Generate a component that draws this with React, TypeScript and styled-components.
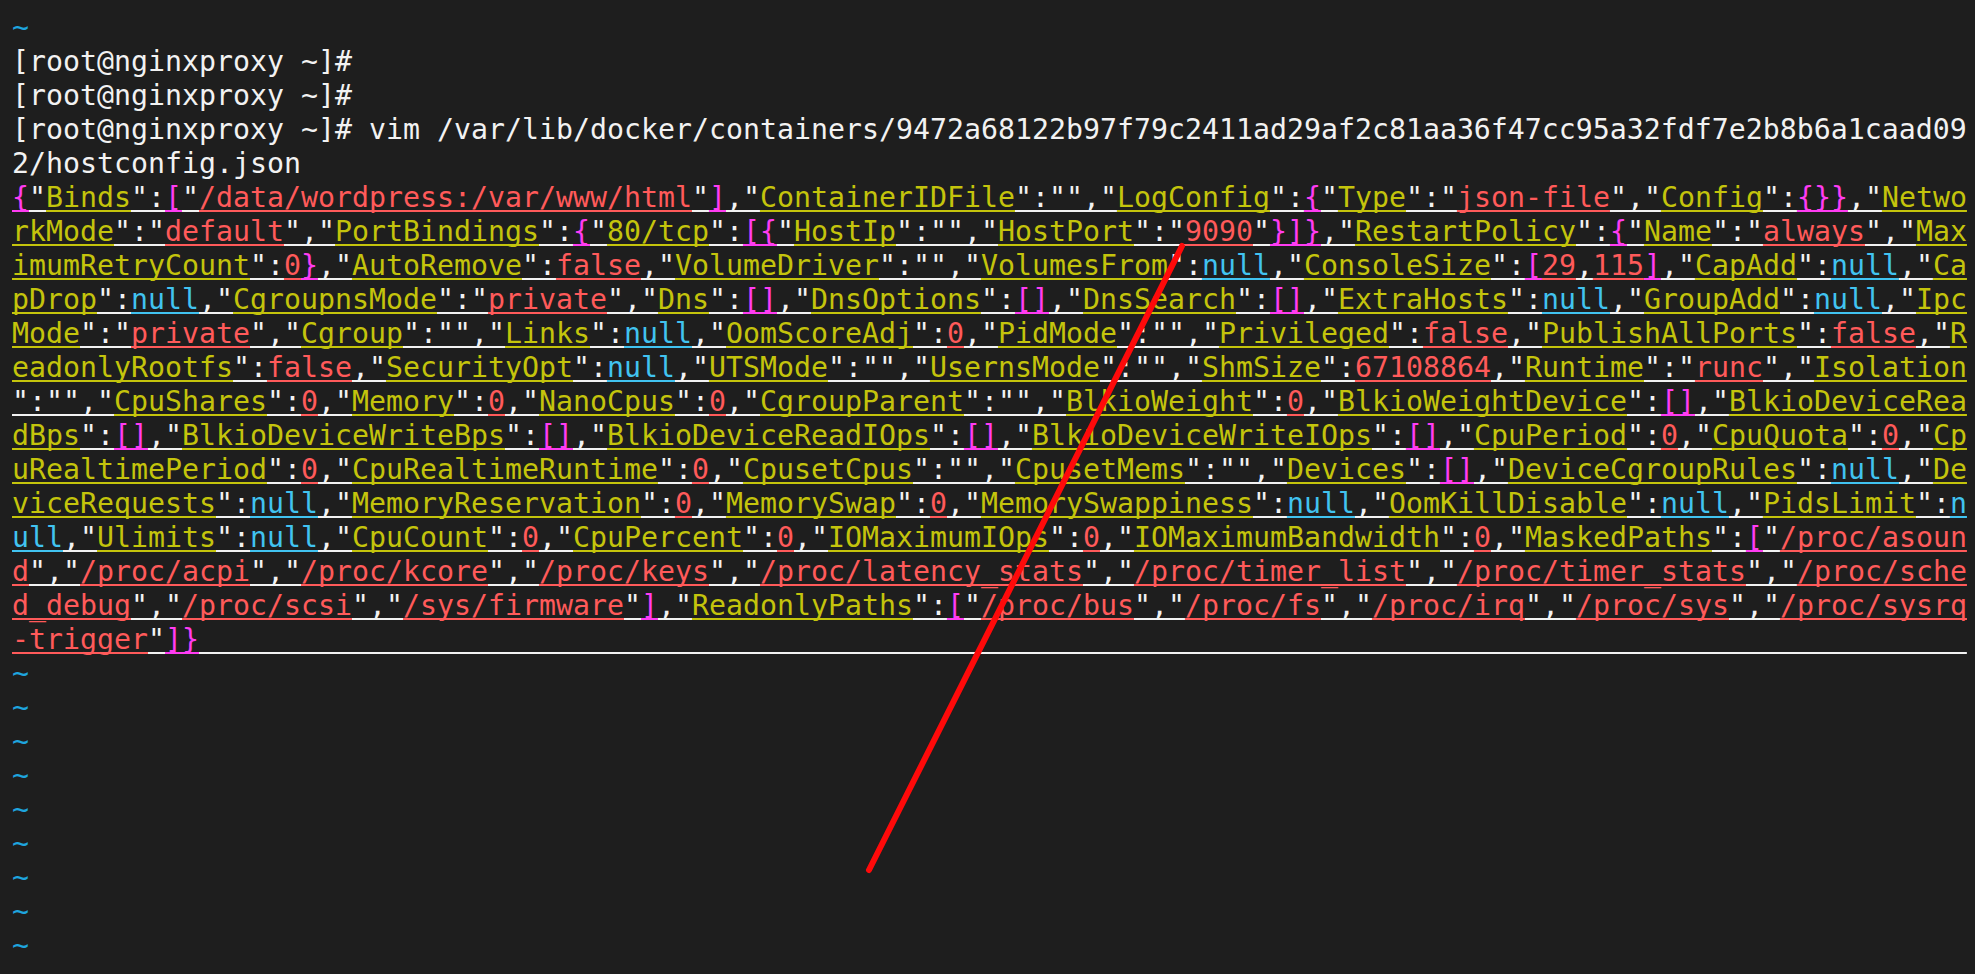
import React from 'react';
import styled, { createGlobalStyle } from 'styled-components';

const COLS = 115;

type Kind = 'text' | 'key' | 'str' | 'brace' | 'nil';

const palette: Record<Kind, string> = {
  text: '#f2f2f2',
  key: '#c4c40c',
  str: '#ff5a5a',
  brace: '#ff3cf2',
  nil: '#41c3f0',
};

const hostConfig =
  '{"Binds":["/data/wordpress:/var/www/html"],"ContainerIDFile":"","LogConfig":{"Type":"json-file","Config":{}},' +
  '"NetworkMode":"default","PortBindings":{"80/tcp":[{"HostIp":"","HostPort":"9090"}]},' +
  '"RestartPolicy":{"Name":"always","MaximumRetryCount":0},"AutoRemove":false,"VolumeDriver":"","VolumesFrom":null,' +
  '"ConsoleSize":[29,115],"CapAdd":null,"CapDrop":null,"CgroupnsMode":"private","Dns":[],"DnsOptions":[],' +
  '"DnsSearch":[],"ExtraHosts":null,"GroupAdd":null,"IpcMode":"private","Cgroup":"","Links":null,"OomScoreAdj":0,' +
  '"PidMode":"","Privileged":false,"PublishAllPorts":false,"ReadonlyRootfs":false,"SecurityOpt":null,"UTSMode":"",' +
  '"UsernsMode":"","ShmSize":67108864,"Runtime":"runc","Isolation":"","CpuShares":0,"Memory":0,"NanoCpus":0,' +
  '"CgroupParent":"","BlkioWeight":0,"BlkioWeightDevice":[],"BlkioDeviceReadBps":[],"BlkioDeviceWriteBps":[],' +
  '"BlkioDeviceReadIOps":[],"BlkioDeviceWriteIOps":[],"CpuPeriod":0,"CpuQuota":0,"CpuRealtimePeriod":0,' +
  '"CpuRealtimeRuntime":0,"CpusetCpus":"","CpusetMems":"","Devices":[],"DeviceCgroupRules":null,"DeviceRequests":null,' +
  '"MemoryReservation":0,"MemorySwap":0,"MemorySwappiness":null,"OomKillDisable":null,"PidsLimit":null,"Ulimits":null,' +
  '"CpuCount":0,"CpuPercent":0,"IOMaximumIOps":0,"IOMaximumBandwidth":0,' +
  '"MaskedPaths":["/proc/asound","/proc/acpi","/proc/kcore","/proc/keys","/proc/latency_stats","/proc/timer_list",' +
  '"/proc/timer_stats","/proc/sched_debug","/proc/scsi","/sys/firmware"],' +
  '"ReadonlyPaths":["/proc/bus","/proc/fs","/proc/irq","/proc/sys","/proc/sysrq-trigger"]}';

const vimCommand =
  '[root@nginxproxy ~]# vim /var/lib/docker/containers/9472a68122b97f79c2411ad29af2c81aa36f47cc95a32fdf7e2b8b6a1caad092/hostconfig.json';

type Cell = { ch: string; kind: Kind };

// colour every char the way vim's json syntax does it
const highlight = (src: string): Cell[] => {
  const out: Cell[] = [];
  let i = 0;
  while (i < src.length) {
    const c = src[i];
    if ('{}[]'.includes(c)) {
      out.push({ ch: c, kind: 'brace' });
      i++;
    } else if (c === '"') {
      const end = src.indexOf('"', i + 1);
      const isKey = src[end + 1] === ':';
      out.push({ ch: '"', kind: 'text' });
      for (const ch of src.slice(i + 1, end)) out.push({ ch, kind: isKey ? 'key' : 'str' });
      out.push({ ch: '"', kind: 'text' });
      i = end + 1;
    } else if (src.startsWith('null', i)) {
      for (const ch of 'null') out.push({ ch, kind: 'nil' });
      i += 4;
    } else if (/[0-9a-z-]/.test(c)) {
      out.push({ ch: c, kind: 'str' });
      i++;
    } else {
      out.push({ ch: c, kind: 'text' });
      i++;
    }
  }
  return out;
};

const wrap = <T,>(items: T[]): T[][] => {
  const rows: T[][] = [];
  for (let i = 0; i < items.length; i += COLS) rows.push(items.slice(i, i + COLS));
  return rows;
};

const group = (cells: Cell[]) => {
  const segs: { text: string; kind: Kind }[] = [];
  cells.forEach((c) => {
    const last = segs[segs.length - 1];
    if (last && last.kind === c.kind) last.text += c.ch;
    else segs.push({ text: c.ch, kind: c.kind });
  });
  return segs;
};

const GlobalStyle = createGlobalStyle`
  html, body {
    margin: 0;
    padding: 0;
    background: #1e1e1e;
    overflow: hidden;
  }
`;

const Screen = styled.div`
  position: relative;
  width: 1975px;
  height: 974px;
  overflow: hidden;
  background: #1e1e1e;
`;

const Terminal = styled.div`
  display: flex;
  flex-direction: column;
  padding: 11px 0 0 12px;
  font-family: 'DejaVu Sans Mono', 'Liberation Mono', monospace;
  font-size: 28.24px;
  color: ${palette.text};
`;

const Line = styled.div`
  height: 34px;
  line-height: 34px;
  white-space: pre;
`;

const Seg = styled.span<{ $kind: Kind; $cursor?: boolean }>`
  color: ${(p) => palette[p.$kind]};
  text-decoration: ${(p) => (p.$cursor ? 'underline' : 'none')};
  text-decoration-thickness: 2px;
  text-underline-offset: 3px;
  text-decoration-skip-ink: none;
`;

const Tilde = styled(Line)`
  color: #1ea5de;
`;

const Annotation = styled.svg`
  position: absolute;
  inset: 0;
  pointer-events: none;
`;

const App = () => {
  const jsonRows = wrap(highlight(hostConfig));
  const last = jsonRows[jsonRows.length - 1];
  while (last.length < COLS) last.push({ ch: ' ', kind: 'text' });

  const commandRows = wrap(vimCommand.split(''));

  return (
    <Screen>
      <GlobalStyle />
      <Terminal>
        <Tilde>~</Tilde>
        <Line>[root@nginxproxy ~]#</Line>
        <Line>[root@nginxproxy ~]#</Line>
        {commandRows.map((r, i) => (
          <Line key={`c${i}`}>{r.join('')}</Line>
        ))}
        {jsonRows.map((r, i) => (
          <Line key={`j${i}`}>
            {group(r).map((s, k) => (
              <Seg key={k} $kind={s.kind} $cursor>
                {s.text}
              </Seg>
            ))}
          </Line>
        ))}
        {Array.from({ length: 9 }).map((_, i) => (
          <Tilde key={`t${i}`}>~</Tilde>
        ))}
      </Terminal>
      <Annotation width="1975" height="974" viewBox="0 0 1975 974">
        <line x1="869" y1="870" x2="1182" y2="246" stroke="#ff0a0a" strokeWidth="6" strokeLinecap="round" />
      </Annotation>
    </Screen>
  );
};

export default App;
